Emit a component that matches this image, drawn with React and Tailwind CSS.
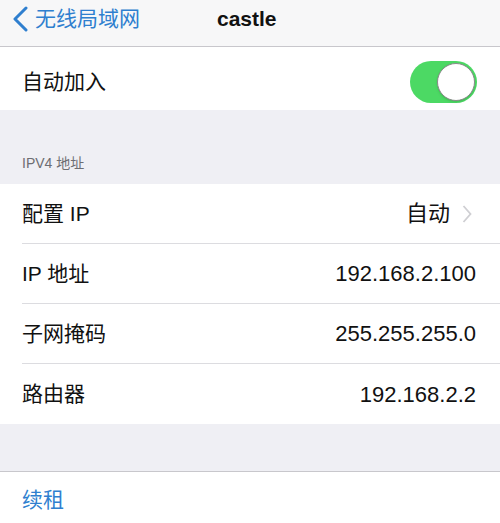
import { useState } from 'react';

const font = { fontFamily: '"Liberation Sans", "Noto Sans CJK SC", sans-serif' };

const Row = ({ label, value, chevron, last }) => (
  <div className="flex h-[60px] items-center pl-[22px]">
    <div
      className={`flex h-full flex-1 items-center justify-between pr-[24px] ${
        last ? '' : 'border-b border-[#dcdce0]'
      }`}
    >
      <span className="text-[21px] text-[#111]">{label}</span>
      <span className="flex items-center text-[22px] text-[#111]">
        {value}
        {chevron && (
          <svg width="10" height="20" viewBox="0 0 10 20" className="mr-[4px] ml-[12px]">
            <path d="M1.5 2 L8.5 10 L1.5 18" fill="none" stroke="#cfcfd3" strokeWidth="1.8" />
          </svg>
        )}
      </span>
    </div>
  </div>
);

const App = () => {
  const [autoJoin, setAutoJoin] = useState(true);

  const rows = [
    { label: '配置 IP', value: '自动', chevron: true },
    { label: 'IP 地址', value: '192.168.2.100' },
    { label: '子网掩码', value: '255.255.255.0' },
    { label: '路由器', value: '192.168.2.2' },
  ];

  return (
    <div className="h-[523px] w-[500px] overflow-hidden bg-[#efeff4]" style={font}>
      {/* nav bar */}
      <div className="relative flex h-[47px] items-center border-b border-[#c8c7cc] bg-[#f7f7f8] pb-[8px]">
        <div className="flex items-center pl-[11px] text-[#2f7fcf]">
          <svg width="18" height="26" viewBox="0 0 18 26">
            <path d="M15 2 L4 13 L15 24" fill="none" stroke="#2f7fcf" strokeWidth="3" strokeLinecap="round" strokeLinejoin="round" />
          </svg>
          <span className="ml-[6px] text-[21px]">无线局域网</span>
        </div>
        <span className="absolute left-[217px] text-[21px] font-bold text-[#111]">castle</span>
      </div>

      {/* auto join */}
      <div className="flex h-[63px] items-center justify-between bg-white pt-[6px] pl-[22px] pr-[23px]">
        <span className="text-[21px] text-[#111]">自动加入</span>
        <button
          type="button"
          onClick={() => setAutoJoin(!autoJoin)}
          className={`flex h-[42px] w-[67px] items-center rounded-full p-[2px] ${
            autoJoin ? 'justify-end bg-[#4cd964]' : 'justify-start bg-[#e5e5ea]'
          }`}
        >
          <span className="h-[38px] w-[38px] rounded-full border border-[#8a8a8a] bg-white shadow" />
        </button>
      </div>

      {/* section header */}
      <div className="flex h-[74px] items-end pb-[10px] pl-[22px] text-[14px] text-[#6d6d72]">
        IPV4 地址
      </div>

      <div className="bg-white">
        {rows.map((r, i) => (
          <Row key={r.label} {...r} last={i === rows.length - 1} />
        ))}
      </div>

      <div className="h-[48px] border-b border-[#c8c7cc]" />

      <div className="flex h-[60px] items-start bg-white pt-[12px] pl-[22px]">
        <span className="text-[21px] text-[#2f7fcf]">续租</span>
      </div>
    </div>
  );
};

export default App;
